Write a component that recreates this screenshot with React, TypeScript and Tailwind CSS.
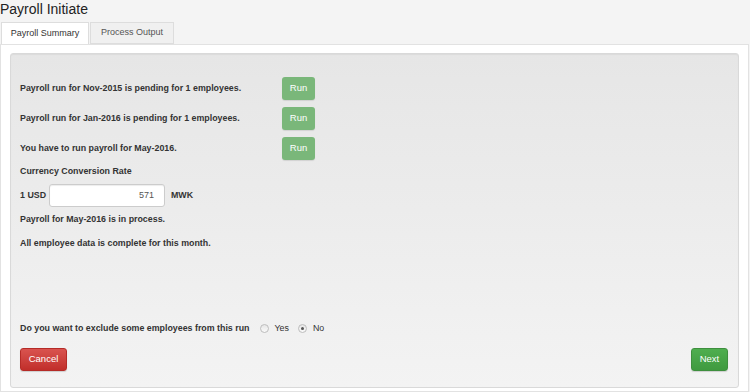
import React from "react";

const RunBtn = () => (
  <button className="h-[23px] w-[33px] rounded-[3px] bg-[#7ab77a] text-[9.5px] font-normal text-white shadow-[0_1px_1px_rgba(0,0,0,0.1)]">
    Run
  </button>
);

const Radio = ({ checked }: { checked?: boolean }) => (
  <span className="inline-flex h-[9px] w-[9px] items-center justify-center rounded-full border border-[#bdbdbd] bg-gradient-to-b from-[#e6e6e6] to-[#fafafa]">
    {checked && <span className="h-[3px] w-[3px] rounded-full bg-[#555]" />}
  </span>
);

export default function App() {
  return (
    <div
      className="h-[392px] w-[750px] overflow-hidden bg-[#f4f4f4] text-[#333]"
      style={{ fontFamily: '"Liberation Sans", Arial, sans-serif' }}
    >
      <div className="h-[23px] text-[14px] leading-[18px] text-[#222]">Payroll Initiate</div>
      <div className="flex h-[21px] items-end pl-[1px]">
        <div className="relative z-10 flex h-[22px] w-[88px] items-center justify-center border border-b-0 border-[#dddddd] bg-white text-[9px] text-[#333]">
          Payroll Summary
        </div>
        <div className="ml-[1px] flex h-[22px] w-[84px] items-center justify-center border border-[#dddddd] bg-[#f0f0f0] text-[9px] text-[#555]">
          Process Output
        </div>
      </div>
      <div className="h-[348px] w-[749px] border border-[#e2e2e2] bg-white px-[9px] pt-[8px]">
        <div className="flex h-[335px] flex-col rounded-[3px] border border-[#d9d9d9] bg-gradient-to-b from-[#e6e6e6] to-[#f3f3f3] pb-[16px] pl-[9px] pr-[9px] pt-[23px] text-[8.85px] font-bold shadow-[inset_0_1px_1px_rgba(0,0,0,0.05)]">
          <div className="flex h-[23px] items-center">
            <div className="w-[262px]">Payroll run for Nov-2015 is pending for 1 employees.</div>
            <RunBtn />
          </div>
          <div className="mt-[7px] flex h-[23px] items-center">
            <div className="w-[262px]">Payroll run for Jan-2016 is pending for 1 employees.</div>
            <RunBtn />
          </div>
          <div className="mt-[7px] flex h-[23px] items-center">
            <div className="w-[262px]">You have to run payroll for May-2016.</div>
            <RunBtn />
          </div>
          <div className="mt-[5px] leading-[12px]">Currency Conversion Rate</div>
          <div className="mt-[7px] flex h-[23px] items-center">
            <span className="w-[29px]">1 USD</span>
            <div className="flex h-[23px] w-[116px] items-center justify-end rounded-[3px] border border-[#cccccc] bg-white pr-[10px] text-[9px] font-normal text-[#555] shadow-[inset_0_1px_1px_rgba(0,0,0,0.075)]">
              571
            </div>
            <span className="ml-[6px]">MWK</span>
          </div>
          <div className="mt-[6px] leading-[12px]">Payroll for May-2016 is in process.</div>
          <div className="mt-[12px] leading-[12px]">All employee data is complete for this month.</div>
          <div className="mt-auto flex items-center leading-[12px]">
            <span>Do you want to exclude some employees from this run</span>
            <span className="ml-[10px] flex items-center gap-[6px] font-normal">
              <Radio />
              <span>Yes</span>
            </span>
            <span className="ml-[9px] flex items-center gap-[6px] font-normal">
              <Radio checked />
              <span>No</span>
            </span>
          </div>
          <div className="mt-[14px] flex items-center justify-between">
            <button className="h-[23px] w-[47px] rounded-[3px] border border-[#b52b27] bg-gradient-to-b from-[#d9534f] to-[#c12e2a] text-[9.5px] font-normal text-white shadow-[0_1px_1px_rgba(0,0,0,0.15)]">
              Cancel
            </button>
            <button className="mr-[1px] h-[23px] w-[37px] rounded-[3px] border border-[#3e8f3e] bg-gradient-to-b from-[#4fae4f] to-[#3f9a3f] text-[9.5px] font-normal text-white shadow-[0_1px_1px_rgba(0,0,0,0.15)]">
              Next
            </button>
          </div>
        </div>
      </div>
    </div>
  );
}
